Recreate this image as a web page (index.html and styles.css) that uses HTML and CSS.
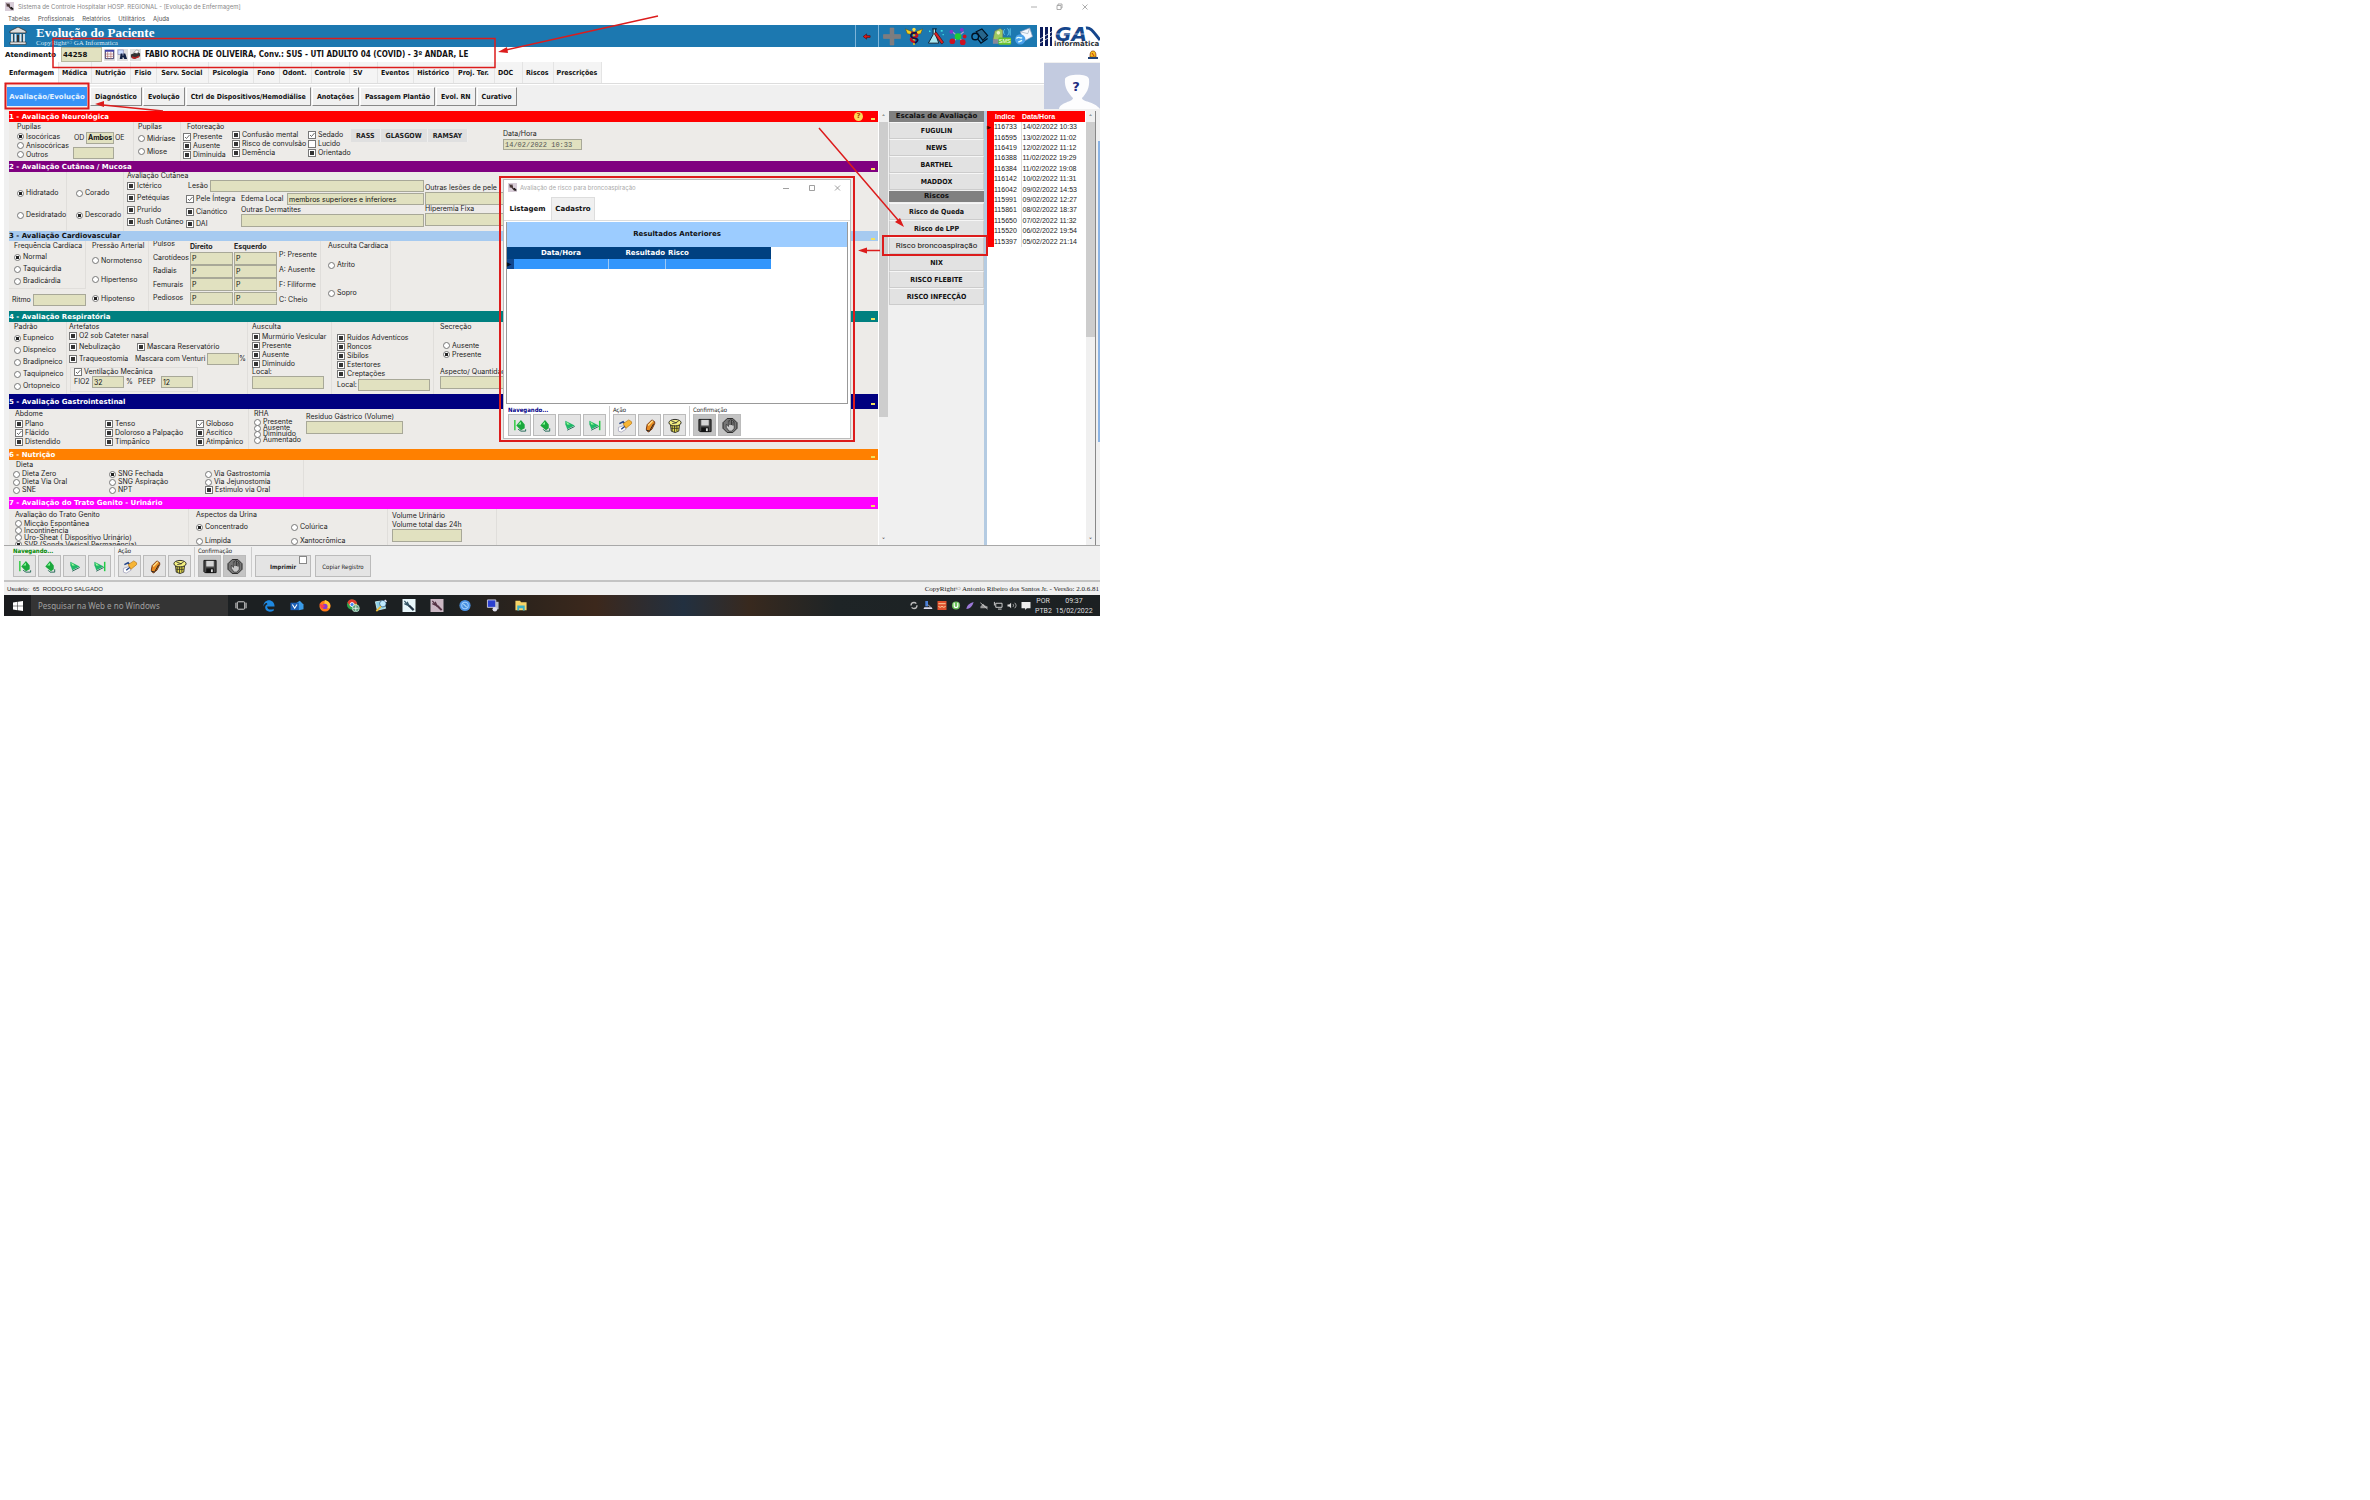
FILE: index.html
```html
<!DOCTYPE html>
<html lang="pt-BR">
<head>
<meta charset="utf-8">
<title>Sistema de Controle Hospitalar - Evolução de Enfermagem</title>
<link rel="stylesheet" href="styles.css">
</head>
<body>
<svg class="defs" aria-hidden="true">
  <symbol id="i-tool" viewBox="0 0 12 12"><path fill="#d8cdd8" d="M0 0h12v12H0z"/><path d="M2 2l7 8M5 2l1 4M2 5l4 1" stroke="#433" stroke-width="1.6"/><path d="M8 7l3 3" stroke="#111" stroke-width="2"/></symbol>
  <symbol id="i-first" viewBox="0 0 16 16"><path d="M2.500 2v11" stroke="#3c4" stroke-width="1.600"/><path d="M4 8l5-6 4 5v4l-4 2z" fill="#1aa83c"/><path d="M6 7l3-3v3z" fill="#8f9"/><path d="M6 12l3 2h5v-2" stroke="#265" fill="none"/></symbol>
  <symbol id="i-prev" viewBox="0 0 16 16"><path d="M3 8l5-6 4 5v4l-3 2z" fill="#1aa83c"/><path d="M5 7l3-3v3z" fill="#8f9"/><path d="M6 12l2 2h5v-3" stroke="#265" fill="none"/></symbol>
  <symbol id="i-next" viewBox="0 0 16 16"><path d="M3 3l10 5-8 4-1-3-1-2z" fill="#20b868"/><path d="M4 4l4 3H5z" fill="#af9"/><path d="M5 13l8-4" stroke="#265"/></symbol>
  <symbol id="i-last" viewBox="0 0 16 16"><path d="M2 3l10 5-8 4-1-3-1-2z" fill="#20b868"/><path d="M3 4l4 3H4z" fill="#af9"/><path d="M13 3v10" stroke="#2c4" stroke-width="1.600"/><path d="M4 13l8-4" stroke="#265"/></symbol>
  <symbol id="i-new" viewBox="0 0 16 16"><path d="M1 10l6-2 2 4-5 3-3-1z" fill="#fff" stroke="#88a" stroke-width=".6"/><path d="M2 6l4-2 3 4-5 4" fill="none" stroke="#248" stroke-width="1.500"/><path d="M6 6l6-4 3 2v2l-6 5z" fill="#f7b535" stroke="#a60" stroke-width=".6"/></symbol>
  <symbol id="i-edit" viewBox="0 0 16 16"><path d="M4 12l1-5 5-5 3 2v2l-3 6-4 3z" fill="#e88a20" stroke="#620" stroke-width=".9"/><path d="M6 8l5-5" stroke="#fd8" stroke-width="1.600"/><path d="M4 13l4 1M12 6l-4 7" stroke="#222"/></symbol>
  <symbol id="i-trash" viewBox="0 0 16 16"><path d="M3 6h10l-1 8-4 1.500L4 14z" fill="#e6dc50" stroke="#222" stroke-width=".9"/><ellipse cx="8" cy="5" rx="6.500" ry="3.500" fill="#f4f080" stroke="#222"/><path d="M5 8v6M7.500 8v7M10 8v6M4 11h8" stroke="#332" stroke-width=".9"/><path d="M4 3l5 2 3-2M5 6l5-1" stroke="#333" fill="none" stroke-width=".9"/></symbol>
  <symbol id="i-save" viewBox="0 0 16 16"><path d="M1.500 1.500h13v13h-12l-1-1z" fill="#4a4a4a" stroke="#111"/><path fill="#d4d4d4" d="M4 2h8v6H4z"/><path fill="#111" d="M4 10h8v5H4z"/><path fill="#ddd" d="M9 11h2v3H9z"/></symbol>
  <symbol id="i-stop" viewBox="0 0 16 16"><path d="M5 .5h6l4.500 4.500v6L11 15.500H5L.5 11V5z" fill="#777" stroke="#222"/><path d="M4 7v3l3 4h3l2.500-3V4h-1.300v4V2.500H9.700v5V2H8v5.500V3H6.300v6L5 7z" fill="#c9c9c9" stroke="#222" stroke-width=".7"/></symbol>
</svg>

<main class="app">
  <header>
    <div class="titlebar">
      <svg class="ico9"><use href="#i-tool"/></svg><span>Sistema de Controle Hospitalar HOSP. REGIONAL - [Evolução de Enfermagem]</span>
      <span class="winctl"><svg viewBox="0 0 60 8" width="60" height="8" fill="none" stroke="#999" stroke-width=".8"><path d="M1 4h6"/><path d="M27 2.500h4v4h-4zM28 2.500V1h4v4h-1M52.500 1.500l5 5M57.500 1.500l-5 5"/></svg></span>
    </div>
    <nav class="menu"><a href="#">Tabelas</a><a href="#">Profissionais</a><a href="#">Relatórios</a><a href="#">Utilitários</a><a href="#">Ajuda</a></nav>
    <div class="banner">
      <svg class="temple" viewBox="0 0 18 18"><path d="M9 0l8 4v2H1V4z" fill="#ddd" stroke="#333" stroke-width=".8"/><path d="M3 7v8M6.500 7v8M11.500 7v8M15 7v8" stroke="#e8e8e8" stroke-width="1.800"/><path d="M4.500 7v8M13.500 7v8" stroke="#333" stroke-width=".7"/><path d="M8 8h2v7H8z" fill="#333"/><path d="M1 15h16v2.500H1z" fill="#ddd" stroke="#333" stroke-width=".6"/></svg>
      <div class="brand"><h1>Evolução do Paciente</h1><p>CopyRight© GA Informatica</p></div>
      <div class="bannericons">
        <button class="back" aria-label="Voltar"><svg viewBox="0 0 10 8" width="9" height="7"><path d="M0 4l4-3v2h4v2H4v2z" fill="#e01818" stroke="#400" stroke-width=".6"/></svg></button>
        <svg viewBox="0 0 20 20"><path d="M8 1h4v7h7v4h-7v7H8v-7H1V8h7z" fill="#7d7d80" stroke="#a08070" stroke-width=".5"/></svg>
        <svg viewBox="0 0 20 20"><path d="M1 2l7 3v3L3 7zM19 2l-7 3v3l5-1z" fill="#f0d020" stroke="#640" stroke-width=".5"/><path d="M10 2v17" stroke="#fc0" stroke-width="1.500"/><path d="M7 6c8 0 8 5 3 5s-4 4 1 5" fill="none" stroke="#c01020" stroke-width="2.400"/><path d="M13 6c-8 0-8 5-2 6s1 4 0 5" fill="none" stroke="#114" stroke-width="1.800"/><circle cx="10" cy="2.500" r="1.800" fill="#fd4"/></svg>
        <svg viewBox="0 0 20 20"><path d="M6 2h5M7 2v6l-5 9h11L9.500 8V2" fill="#a8e6ee" stroke="#123" stroke-width="1"/><path d="M10 5l8 11-2 2L8 7z" fill="#d22" stroke="#300" stroke-width=".6"/><path d="M3 4l1 1M15 4h2M17 8h1" stroke="#4fe" stroke-width="1.300"/></svg>
        <svg viewBox="0 0 20 20"><path d="M10 10L4 5M10 10l6-5M10 10l-5 6M10 10l6 6" stroke="#a9c" stroke-width="1.200"/><circle cx="10" cy="10" r="3.500" fill="#2c3"/><g fill="#c12"><circle cx="4" cy="15" r="3"/><circle cx="15" cy="16" r="3"/><circle cx="17" cy="10" r="2"/></g><g fill="#83c"><circle cx="3" cy="5" r="2"/><circle cx="14" cy="3" r="2"/></g></svg>
        <svg viewBox="0 0 20 20"><path d="M6 5l6-3 6 7-5 5z" fill="#27668c" stroke="#012" stroke-width="1.200"/><circle cx="5" cy="10" r="3.500" fill="none" stroke="#012" stroke-width="1.500"/><path d="M8 13l3 4 7-5" fill="none" stroke="#012" stroke-width="1.300"/></svg>
        <svg viewBox="0 0 22 20"><path d="M3 4l6-3 3 2v9l-7 3-4-2z" fill="#9ec860" stroke="#567" stroke-width=".8"/><circle cx="7" cy="6" r="2" fill="#e8f4c0"/><path d="M1 13h6v5H1z" fill="#889"/><rect x="7" y="11" width="14" height="8" rx="1.500" fill="#6cc52c"/><path d="M14 8a4 4 0 010-6M17 9a6 6 0 000-8M20 9V1" fill="none" stroke="#6ce" stroke-width="1"/><text x="14" y="17" font-family="Liberation Sans" font-size="6" fill="#fff" text-anchor="middle">SMS</text></svg>
        <svg viewBox="0 0 20 20"><path d="M6 5l10-4 3 9-9 5z" fill="#f4f8ff" stroke="#89b" stroke-width=".7"/><path d="M6 5l8 2 2-6" fill="none" stroke="#9ab" stroke-width=".7"/><circle cx="6" cy="13" r="5.500" fill="#4aa0ea"/><path d="M2 12c3-3 4 1 6-1M4 16l4-2" stroke="#dff" fill="none" stroke-width="1.500"/></svg>
      </div>
      <svg class="galogo" viewBox="0 0 60 22"><g fill="#0c1c5c"><path d="M0 2h3v19H0zM5 2h3v19H5zM10 2h2v19h-2z"/></g><path d="M0 14l13-8M0 18l13-8" stroke="#fff" stroke-width=".8"/><text x="15" y="16" font-family="DejaVu Sans" font-weight="bold" font-style="italic" font-size="20" fill="#15468c">GA</text><path d="M16 9h44" stroke="#fff" stroke-width=".6"/><path d="M46 3c5-1 8 5 14 12" fill="none" stroke="#15468c" stroke-width="3"/><text x="14" y="21" font-family="DejaVu Sans" font-weight="bold" font-size="7" fill="#2a3038">informática</text></svg>
    </div>
    <div class="patient">
      <label for="atend">Atendimento</label><input id="atend" value="44258">
      <button aria-label="Agenda"><svg viewBox="0 0 12 12"><path fill="#fff" stroke="#336" d="M1.500 1.500h9v9h-9z"/><path fill="#44a" d="M1 1h10v2H1z"/><path d="M1 5.500h10M1 8h10M4 3v8M7.500 3v8" stroke="#a66" stroke-width=".7"/></svg></button>
      <button aria-label="Localizar"><svg viewBox="0 0 12 12"><path d="M1 1h6v5H1z" fill="#cdf" stroke="#77a" stroke-width=".6"/><path d="M3 11l1-6h2v2h1V5h2l2 6H8L7 9H6v2z" fill="#124"/></svg></button>
      <button aria-label="Imprimir ficha"><svg viewBox="0 0 12 12"><path d="M1 6l7-3 3 2v3l-6 3-4-2z" fill="#333"/><path d="M4 4l3-3 3 1-2 3z" fill="#fff" stroke="#555" stroke-width=".5"/><path d="M2 8l4 1 4-2v2l-5 2-3-1z" fill="#b22"/></svg></button>
      <strong>FABIO ROCHA DE OLIVEIRA, Conv.: SUS - UTI ADULTO 04 (COVID) - 3º ANDAR, LE</strong>
      <svg class="bell" viewBox="0 0 10 10"><path d="M2 7c0-5 1-6 3-6s3 1 3 6z" fill="#f7c020" stroke="#830" stroke-width=".7"/><path d="M0 7h10v2H0z" fill="#247"/><path d="M4 3l2 3" stroke="#c31"/></svg>
    </div>
    <div class="tabsarea">
      <div class="tabscol">
        <nav class="tabs"><a class="on" href="#">Enfermagem</a><a href="#">Médica</a><a href="#">Nutrição</a><a class="roomy" href="#">Fisio</a><a class="roomy" href="#">Serv. Social</a><a class="roomy" href="#">Psicologia</a><a href="#">Fono</a><a href="#">Odont.</a><a href="#">Controle</a><a class="w28" href="#">SV</a><a href="#">Eventos</a><a href="#">Histórico</a><a class="roomy" href="#">Proj. Ter.</a><a class="w28" href="#">DOC</a><a href="#">Riscos</a><a href="#">Prescrições</a></nav>
        <div class="subtabs"><button class="on">Avaliação/Evolução</button><button>Diagnóstico</button><button>Evolução</button><button>Ctrl de Dispositivos/Hemodiálise</button><button>Anotações</button><button>Passagem Plantão</button><button>Evol. RN</button><button>Curativo</button></div>
      </div>
      <svg class="photo" viewBox="0 0 56 46"><path fill="#c3cbe0" d="M0 0h56v46H0z"/><path d="M15 46c1-7 14-7 14-11-4-4-9-10-8-19 1-5 23-6 24 0 1 9-3 15-7 19 0 4 12 3 18 11z" fill="#fdfdfe"/><text x="32" y="28" font-family="DejaVu Sans" font-weight="bold" font-size="13" fill="#202a80" text-anchor="middle">?</text></svg>
    </div>
  </header>

  <div class="work">
    <form class="sections">
      <h2 class="c1">1 - Avaliação Neurológica<span class="help">?</span><i></i></h2>
      <div class="sec">
        <div class="grp s1a"><p class="lg">Pupilas</p>
          <div class="pair"><div class="p9"><label><input type="radio" name="pup" checked>Isocóricas</label><label><input type="radio" name="pup">Anisocóricas</label><label><input type="radio" name="pup">Outros</label></div>
          <div class="odoe"><span>OD</span><input class="bold" aria-label="Olho" value="Ambos"><span>OE</span><input class="wide" aria-label="Outros"></div></div></div>
        <div class="grp s1b"><p class="lg">Pupilas</p><div class="p13"><label><input type="radio" name="mi">Midríase</label><label><input type="radio" name="mi">Miose</label></div></div>
        <div class="grp s1c"><p class="lg ind">Fotoreação</p><div class="p9"><label><input type="checkbox" checked>Presente</label><label><input type="checkbox" class="mx">Ausente</label><label><input type="checkbox" class="mx">Diminuida</label></div></div>
        <div class="grp s1d"><div class="p9"><label><input type="checkbox" class="mx">Confusão mental</label><label><input type="checkbox" class="mx">Risco de convulsão</label><label><input type="checkbox" class="mx">Demência</label></div></div>
        <div class="grp s1e"><div class="p9"><label><input type="checkbox" checked>Sedado</label><label><input type="checkbox">Lucido</label><label><input type="checkbox" class="mx">Orientado</label></div></div>
        <div class="scales"><button type="button">RASS</button><button type="button">GLASGOW</button><button type="button">RAMSAY</button></div>
        <div class="date"><label for="dh">Data/Hora</label><input id="dh" value="14/02/2022 10:33"></div>
      </div>

      <h2 class="c2">2 - Avaliação Cutânea / Mucosa<i></i></h2>
      <div class="sec">
        <div class="grp s2a"><div class="p22"><label><input type="radio" name="hid" checked>Hidratado</label><label><input type="radio" name="hid">Desidratado</label></div></div>
        <div class="grp s2b"><div class="p22"><label><input type="radio" name="cor">Corado</label><label><input type="radio" name="cor" checked>Descorado</label></div></div>
        <div class="grp s2c"><p class="lg">Avaliação Cutânea</p><div class="p12"><label><input type="checkbox" class="mx">Ictérico</label><label><input type="checkbox" class="mx">Petéquias</label><label><input type="checkbox" class="mx">Prurido</label><label><input type="checkbox" class="mx">Rush Cutâneo</label></div></div>
        <div class="s2d">
          <div class="line"><label for="les">Lesão</label><input id="les"></div>
          <div class="line"><label class="pele"><input type="checkbox" checked>Pele Íntegra</label><label for="ede">Edema Local</label><input id="ede" value="membros superiores e inferiores"></div>
          <div class="pair"><div class="p12 pele"><label><input type="checkbox" class="mx">Cianótico</label><label><input type="checkbox" class="mx">DAI</label></div><div class="stack"><label for="der">Outras Dermatites</label><input id="der"></div></div>
        </div>
        <div class="s2e"><div class="stack"><label for="out">Outras lesões de pele</label><input id="out"></div><div class="stack"><label for="hip">Hiperemia Fixa</label><input id="hip"></div></div>
      </div>

      <h2 class="c3">3 - Avaliação Cardiovascular<i></i></h2>
      <div class="sec">
        <div class="s3a"><div class="grp"><p class="lg">Frequência Cardíaca</p><div class="p12"><label><input type="radio" name="fc" checked>Normal</label><label><input type="radio" name="fc">Taquicárdia</label><label><input type="radio" name="fc">Bradicárdia</label></div></div><div class="line"><label for="rit">Ritmo</label><input id="rit"></div></div>
        <div class="grp s3b"><p class="lg">Pressão Arterial</p><div class="p19"><label><input type="radio" name="pa">Normotenso</label><label><input type="radio" name="pa">Hipertenso</label><label><input type="radio" name="pa" checked>Hipotenso</label></div></div>
        <div class="grp s3c">
          <table class="pulse">
            <tr><td class="top">Pulsos</td><th scope="col">Direito</th><th scope="col">Esquerdo</th></tr>
            <tr><td>Carotídeos</td><td><input aria-label="Carotídeo direito" value="P"></td><td><input aria-label="Carotídeo esquerdo" value="P"></td></tr>
            <tr><td>Radiais</td><td><input aria-label="Radial direito" value="P"></td><td><input aria-label="Radial esquerdo" value="P"></td></tr>
            <tr><td>Femurais</td><td><input aria-label="Femural direito" value="P"></td><td><input aria-label="Femural esquerdo" value="P"></td></tr>
            <tr><td>Pediosos</td><td><input aria-label="Pedioso direito" value="P"></td><td><input aria-label="Pedioso esquerdo" value="P"></td></tr>
          </table>
          <div class="key"><span>P: Presente</span><span>A: Ausente</span><span>F: Filiforme</span><span>C: Cheio</span></div>
        </div>
        <div class="grp s3d"><p class="lg">Ausculta Cardíaca</p><div class="p28"><label><input type="radio" name="ac">Atrito</label><label><input type="radio" name="ac">Sopro</label></div></div>
      </div>

      <h2 class="c4">4 - Avaliação Respiratória<i></i></h2>
      <div class="sec">
        <div class="grp s4a"><p class="lg">Padrão</p><div class="p12"><label><input type="radio" name="pd" checked>Eupneico</label><label><input type="radio" name="pd">Dispneico</label><label><input type="radio" name="pd">Bradipneico</label><label><input type="radio" name="pd">Taquipneico</label><label><input type="radio" name="pd">Ortopneico</label></div></div>
        <div class="grp s4b"><p class="lg">Artefatos</p>
          <div class="p8"><label><input type="checkbox" class="mx">O2 sob Cateter nasal</label></div>
          <div class="line"><label class="c68"><input type="checkbox" class="mx">Nebulização</label><label><input type="checkbox" class="mx">Mascara Reservatório</label></div>
          <div class="line"><label class="c66"><input type="checkbox" class="mx">Traqueostomia</label><label class="c68" for="ven">Mascara com Venturi</label><input id="ven"><span>%</span></div>
          <div class="grp vent"><label><input type="checkbox" checked>Ventilação Mecânica</label><div class="line"><label for="fio">FIO2</label><input id="fio" value="32"><span class="pct">%</span><label for="peep">PEEP</label><input id="peep" value="12"></div></div>
        </div>
        <div class="grp s4c"><p class="lg">Ausculta</p><div class="p9"><label><input type="checkbox" class="mx">Murmúrio Vesicular</label><label><input type="checkbox" class="mx">Presente</label><label><input type="checkbox" class="mx">Ausente</label><label><input type="checkbox" class="mx">Diminuído</label></div><div class="stack"><label for="lo1">Local:</label><input id="lo1"></div></div>
        <div class="grp s4d"><div class="p9"><label><input type="checkbox" class="mx">Ruídos Adventícos</label><label><input type="checkbox" class="mx">Roncos</label><label><input type="checkbox" class="mx">Sibilos</label><label><input type="checkbox" class="mx">Estertores</label><label><input type="checkbox" class="mx">Creptações</label></div><div class="line"><label for="lo2">Local:</label><input id="lo2"></div></div>
        <div class="grp s4e"><p class="lg">Secreção</p><div class="p9"><label><input type="radio" name="se">Ausente</label><label><input type="radio" name="se" checked>Presente</label></div><div class="stack"><label for="asp">Aspecto/ Quantidade</label><input id="asp"></div></div>
      </div>

      <h2 class="c5">5 - Avaliação Gastrointestinal<i></i></h2>
      <div class="sec">
        <div class="grp s5a"><p class="lg">Abdome</p><div class="p9 c3x"><label><input type="checkbox" class="mx">Plano</label><label><input type="checkbox" class="mx">Tenso</label><label><input type="checkbox" checked>Globoso</label><label><input type="checkbox" checked>Flácido</label><label><input type="checkbox" class="mx">Doloroso a Palpação</label><label><input type="checkbox" class="mx">Ascítico</label><label><input type="checkbox" class="mx">Distendido</label><label><input type="checkbox" class="mx">Timpânico</label><label><input type="checkbox" class="mx">Atimpânico</label></div></div>
        <div class="grp s5b"><p class="lg">RHA</p><div class="p6"><label><input type="radio" name="rha">Presente</label><label><input type="radio" name="rha">Ausente</label><label><input type="radio" name="rha">Diminuido</label><label><input type="radio" name="rha">Aumentado</label></div></div>
        <div class="stack s5c"><label for="res">Residuo Gástrico (Volume)</label><input id="res"></div>
      </div>

      <h2 class="c6">6 - Nutrição<i></i></h2>
      <div class="sec">
        <div class="grp s6a"><p class="lg ind2">Dieta</p><div class="p8 c3x"><label><input type="radio" name="di">Dieta Zero</label><label><input type="radio" name="di" checked>SNG Fechada</label><label><input type="radio" name="di">Via Gastrostomia</label><label><input type="radio" name="di">Dieta Via Oral</label><label><input type="radio" name="di">SNG Aspiração</label><label><input type="radio" name="di">Via Jejunostomia</label><label><input type="radio" name="di">SNE</label><label><input type="radio" name="di">NPT</label><label><input type="checkbox" class="mx">Estimulo via Oral</label></div></div>
      </div>

      <h2 class="c7">7 - Avaliação do Trato Genito - Urinário<i></i></h2>
      <div class="sec">
        <div class="grp s7a"><p class="lg">Avaliação do Trato Genito</p><div class="p7"><label><input type="radio" name="tg">Micção Espontânea</label><label><input type="radio" name="tg">Incontinência</label><label><input type="radio" name="tg">Uro-Sheat ( Dispositivo Urinário)</label><label><input type="radio" name="tg" checked>SVP (Sonda Vesical Permanência)</label></div></div>
        <div class="grp s7b"><p class="lg">Aspectos da Urina</p><div class="p14 c2x"><label><input type="radio" name="ur" checked>Concentrado</label><label><input type="radio" name="ur">Colúrica</label><label><input type="radio" name="ur">Límpida</label><label><input type="radio" name="ur">Xantocrômica</label></div></div>
        <div class="grp s7c"><p class="lg">Volume Urinário</p><div class="stack"><label for="vol">Volume total das 24h</label><input id="vol"></div></div>
      </div>
    </form>
    <div class="scroll"><b>˄</b><span class="thumb long"></span><b>˅</b></div>
    <aside class="risks">
      <h3>Escalas de Avaliação</h3>
      <button>FUGULIN</button><button>NEWS</button><button>BARTHEL</button><button>MADDOX</button>
      <h3 class="second">Riscos</h3>
      <button>Risco de Queda</button><button>Risco de LPP</button><button class="pick">Risco broncoaspiração</button><button>NIX</button><button>RISCO FLEBITE</button><button>RISCO INFECÇÃO</button>
    </aside>
    <div class="history">
      <table>
        <thead><tr><th></th><th>Indice</th><th>Data/Hora</th></tr></thead>
        <tbody>
        <tr><td>▶</td><td>116733</td><td>14/02/2022 10:33</td></tr>
        <tr><td></td><td>116595</td><td>13/02/2022 11:02</td></tr>
        <tr><td></td><td>116419</td><td>12/02/2022 11:12</td></tr>
        <tr><td></td><td>116388</td><td>11/02/2022 19:29</td></tr>
        <tr><td></td><td>116384</td><td>11/02/2022 19:08</td></tr>
        <tr><td></td><td>116142</td><td>10/02/2022 11:31</td></tr>
        <tr><td></td><td>116042</td><td>09/02/2022 14:53</td></tr>
        <tr><td></td><td>115991</td><td>09/02/2022 12:27</td></tr>
        <tr><td></td><td>115861</td><td>08/02/2022 18:37</td></tr>
        <tr><td></td><td>115650</td><td>07/02/2022 11:32</td></tr>
        <tr><td></td><td>115520</td><td>06/02/2022 19:54</td></tr>
        <tr><td></td><td>115397</td><td>05/02/2022 21:14</td></tr>
        </tbody>
      </table>
    </div>
    <div class="scroll"><b>˄</b><span class="thumb"></span><b>˅</b></div>
    <div class="edge"></div>
  </div>

  <div class="actions main">
    <div class="set"><p class="green">Navegando...</p><button aria-label="Primeiro"><svg><use href="#i-first"/></svg></button><button aria-label="Anterior"><svg><use href="#i-prev"/></svg></button><button aria-label="Próximo"><svg><use href="#i-next"/></svg></button><button aria-label="Último"><svg><use href="#i-last"/></svg></button></div>
    <div class="set"><p>Ação</p><button aria-label="Novo"><svg><use href="#i-new"/></svg></button><button aria-label="Editar"><svg><use href="#i-edit"/></svg></button><button aria-label="Excluir"><svg><use href="#i-trash"/></svg></button></div>
    <div class="set"><p>Confirmação</p><button class="dk" aria-label="Salvar"><svg><use href="#i-save"/></svg></button><button class="dk" aria-label="Cancelar"><svg><use href="#i-stop"/></svg></button></div>
    <div class="set last"><button class="txt print"><strong>Imprimir</strong></button><input type="checkbox" class="prev" aria-label="Visualizar impressão"><button class="txt">Copiar Registro</button></div>
  </div>
  <footer class="status"><span>Usuário:&nbsp; 65 &nbsp;RODOLFO SALGADO</span><span class="serif">CopyRight© Antonio Ribeiro dos Santos Jr. - Versão: 2.0.6.81</span></footer>

  <div class="taskbar">
    <button class="start" aria-label="Iniciar"><svg viewBox="0 0 10 10" width="10" height="10"><path fill="#fff" d="M0 1.500l4.500-.7v4H0zM5 .7L10 0v4.800H5zM0 5.300h4.500v4L0 8.600zM5 5.300h5V10l-5-.7z"/></svg></button>
    <input class="search" placeholder="Pesquisar na Web e no Windows" aria-label="Pesquisar">
    <div class="apps">
      <svg viewBox="0 0 14 14"><rect x="3" y="3" width="8" height="8" rx="1" fill="none" stroke="#ddd"/><path d="M1.500 4v6M12.500 4v6" stroke="#ddd"/></svg>
      <svg viewBox="0 0 14 14"><path d="M1 8c0-9 12-9 12 0H5c0 4 5 4 7 2.500v2.200C7 15 2 13 3 8c1-3 6-3 6-1.500H5C6 3 2 4 1 8z" fill="#1e88e0"/></svg>
      <svg viewBox="0 0 14 14"><path d="M5 5l5-3 4 4v5l-5 1z" fill="#3a9be8"/><path d="M0 4h9v8H0z" fill="#1c5fb5"/><path d="M2 6l2.500 4L7 6" stroke="#fff" fill="none" stroke-width="1.200"/></svg>
      <svg viewBox="0 0 14 14"><circle cx="7" cy="7.500" r="6" fill="#ff7a1a"/><path d="M7 1c4 1 7 5 5 9-4 0-7-2-5-9z" fill="#ffc832"/><circle cx="7" cy="8" r="2.800" fill="#8a3ad0"/><path d="M1 5c2 0 3 2 6 2-1 3-4 3-4 3z" fill="#ff3e4e"/></svg>
      <svg viewBox="0 0 14 14"><circle cx="6" cy="6" r="5.500" fill="#2da44e"/><path d="M1 3.500A5.500 5.500 0 0111.400 5H6L4 8z" fill="#e33b2e"/><path d="M11.500 5c0 4-2 6-5 6.500L8 6z" fill="#fbc116"/><circle cx="6" cy="6" r="2.200" fill="#4285f4" stroke="#fff"/><circle cx="10" cy="10" r="3.800" fill="#5a9a78" stroke="#dfe" stroke-width=".7"/><path d="M10 7v6M7 10h6" stroke="#fff" stroke-width=".8"/></svg>
      <svg viewBox="0 0 14 14"><path d="M1 3l8-1 3 8-9 2z" fill="#8ed0e8" stroke="#dff" stroke-width=".8"/><circle cx="9" cy="5" r="3.500" fill="#bfeaff" stroke="#246" stroke-width=".7"/><path d="M7 8l-5 5" stroke="#eb3" stroke-width="1.800"/><path d="M11 1l2 2" stroke="#eef" stroke-width="1.500"/></svg>
      <svg viewBox="0 0 14 14"><path fill="#e8f6fa" d="M0 0h14v14H0z"/><path d="M2 2l5 6M5 3l2 4M2 5l4 2" stroke="#356" stroke-width="1.300"/><path d="M7 7l5 5" stroke="#234" stroke-width="2.400"/></svg>
      <svg viewBox="0 0 14 14"><path fill="#cbb8c4" d="M0 0h14v14H0z"/><path d="M2 2l5 6M5 3l2 4M2 5l4 2" stroke="#534" stroke-width="1.300"/><path d="M7 7l5 5" stroke="#534" stroke-width="2.200"/></svg>
      <svg viewBox="0 0 14 14"><circle cx="7" cy="7" r="6" fill="#4a90e0"/><circle cx="7" cy="7" r="3.500" fill="none" stroke="#9cf" stroke-width="1.200"/><path d="M5 5l4 4" stroke="#dff"/></svg>
      <svg viewBox="0 0 14 14"><path d="M1 1h9v8H1z" fill="#2a3fd0" stroke="#ccd"/><path d="M10 3h3v8h-3z" fill="#b8bccc"/><circle cx="9" cy="11" r="2.500" fill="#dde"/></svg>
      <svg viewBox="0 0 14 14"><path d="M1 2h5l1 1.500h6V12H1z" fill="#f8d568"/><path d="M3 7h8v5.500H9V10H5v2.500H3z" fill="#3cb0c8"/></svg>
    </div>
    <div class="tray">
      <svg viewBox="0 0 10 10"><circle cx="5" cy="5" r="3.300" fill="none" stroke="#bbb" stroke-width="1.500" stroke-dasharray="8 2"/></svg>
      <svg viewBox="0 0 10 10"><path d="M2 0h3v6H2z" fill="#4a80d8"/><path d="M1 7h8l1 2H0z" fill="#dde"/><path d="M5 4l3 3" stroke="#ccd"/></svg>
      <svg viewBox="0 0 10 10"><path fill="#e0502c" d="M0 0h10v10H0z"/><path d="M1 3h8M1 6l2 1 2-1 2 1 2-1" stroke="#fda" fill="none"/></svg>
      <svg viewBox="0 0 10 10"><circle cx="5" cy="5" r="4.500" fill="#6cc05c"/><path d="M3 2v3c0 3 4 3 4 0V2" fill="none" stroke="#fff" stroke-width="1.300"/></svg>
      <svg viewBox="0 0 10 10"><path d="M1 9c0-4 4-7 8-8-1 4-3 7-8 8z" fill="#9c78d8"/></svg>
      <svg viewBox="0 0 10 10"><path d="M1 8V6l3-3 2 2 3 1v2z" fill="#999"/><path d="M1 2l8 7" stroke="#ccc"/></svg>
      <svg viewBox="0 0 10 10"><path d="M2.500 2.500h7v4.500h-7zM5 9h4M1 1v4" fill="none" stroke="#ddd"/></svg>
      <svg viewBox="0 0 10 10"><path d="M0 4h2l2-2v6L2 6H0z" fill="#ddd"/><path d="M6 3.500c1 1 1 2 0 3M8 2c2 2 2 4 0 6" fill="none" stroke="#ddd" stroke-width=".8"/></svg>
      <svg viewBox="0 0 10 10"><path d="M0 1h10v7H6L4 10V8H0z" fill="#eee"/></svg>
      <p>POR<br>PTB2</p><p class="clock">09:37<br>15/02/2022</p>
    </div>
  </div>

  <section class="dialog" aria-label="Avaliação de risco para broncoaspiração">
    <div class="dtitle"><svg class="ico9"><use href="#i-tool"/></svg><span>Avaliação de risco para broncoaspiração</span><svg class="dctl" viewBox="0 0 60 8" fill="none" stroke="#888" stroke-width=".8"><path d="M1 4.500h6M27.500 1.500h5v5h-5zM53 1.500l5 5M58 1.500l-5 5"/></svg></div>
    <nav class="dtabs"><a class="on" href="#">Listagem</a><a href="#">Cadastro</a></nav>
    <div class="dbody">
      <h4>Resultados Anteriores</h4>
      <table><thead><tr><th class="sel"></th><th class="a">Data/Hora</th><th class="b">Resultado</th><th class="c">Risco</th></tr></thead><tbody><tr><td class="sel">▶</td><td></td><td></td><td></td></tr></tbody></table>
    </div>
    <div class="actions">
      <div class="set"><p class="navy">Navegando...</p><button aria-label="Primeiro"><svg><use href="#i-first"/></svg></button><button aria-label="Anterior"><svg><use href="#i-prev"/></svg></button><button aria-label="Próximo"><svg><use href="#i-next"/></svg></button><button aria-label="Último"><svg><use href="#i-last"/></svg></button></div>
      <div class="set"><p>Ação</p><button aria-label="Novo"><svg><use href="#i-new"/></svg></button><button aria-label="Editar"><svg><use href="#i-edit"/></svg></button><button aria-label="Excluir"><svg><use href="#i-trash"/></svg></button></div>
      <div class="set last"><p>Confirmação</p><button class="dk" aria-label="Salvar"><svg><use href="#i-save"/></svg></button><button class="dk" aria-label="Cancelar"><svg><use href="#i-stop"/></svg></button></div>
    </div>
  </section>

  <svg class="marks" viewBox="4 0 1096 617" fill="none" stroke="#dc1c1c" stroke-width="1.500" aria-hidden="true">
    <path d="M53 38.500h442v29H53z"/>
    <path d="M5.500 83.500h83v25h-83z" stroke-width="2"/>
    <path d="M500 177h354v264H500z" stroke-width="2"/>
    <path d="M883 236h104v19H883z" stroke-width="2"/>
    <path d="M658 16L506 50M819 128l79 92M880 250.500h-14M163 111l-60-6"/>
    <g fill="#dc1c1c" stroke="none"><path d="M498 52l9-5 1 6zM904 227l-9-5 5-4zM858 250.500l9-3v6zM95 104l9-3v6z"/></g>
  </svg>
</main>
</body>
</html>
```
FILE: styles.css
```css
* { box-sizing: border-box; }
body { margin: 0; background: #fff; color: #222; font: 7px/8px Inter, "Liberation Sans", sans-serif; }
h1, h2, h3, h4, p { margin: 0; }
a { color: inherit; text-decoration: none; }
button, input { font: inherit; color: inherit; margin: 0; padding: 0; border-radius: 0; }
table { border-collapse: collapse; }
.defs { position: absolute; width: 0; height: 0; }
.app { position: relative; max-width: 1096px; margin-left: 4px; background: #f0f0f0; overflow: hidden; }
.ico9 { width: 9px; height: 9px; }

/* window chrome */
header { background: #fff; }
.titlebar { display: flex; align-items: center; gap: 4px; height: 13px; padding: 0 10px 0 1px; font: 6px/8px Inter, sans-serif; color: #888; }
.winctl { margin-left: auto; display: flex; }
.menu { display: flex; gap: 8px; height: 12px; padding: 2px 4px; font: 6px/8px Inter, sans-serif; color: #555; }
.banner { display: flex; align-items: center; height: 22px; background: #1c78b0; }
.temple { width: 18px; height: 18px; margin: 0 9px 0 5px; }
.brand { color: #fff; font-family: "Liberation Serif", serif; }
h1 { font-size: 13px; line-height: 13px; font-weight: bold; }
.brand p { font-size: 7px; line-height: 8px; color: #d8e8f4; }
.bannericons { display: flex; align-items: center; gap: 2px; margin-left: auto; height: 22px; padding-right: 3px; }
.bannericons > svg { width: 20px; height: 19px; }
.back { width: 24px; height: 22px; background: #1c78b0; border: 1px solid #7db4d8; border-width: 0 1px; display: grid; place-items: center; margin-right: 1px; }
.galogo { width: 63px; height: 22px; padding-left: 3px; background: #fff; }
.patient { display: flex; align-items: center; height: 15px; gap: 2px; font: bold 7px/8px "DejaVu Sans", sans-serif; color: #111; }
.patient label { width: 55px; padding-left: 1px; }
.patient input { width: 41px; height: 15px; background: #e1e1c0; border: 1px solid #b8b8a0; padding-left: 1px; }
.patient button { width: 11px; height: 12px; border: 0; background: #e0e0e0; display: grid; }
.patient strong { margin-left: 2px; font: bold 8px/8px "DejaVu Sans Condensed", "Noto Sans", sans-serif; }
.bell { width: 10px; height: 10px; margin: 0 2px 0 auto; }
.tabsarea { display: flex; height: 49px; background: #f0f0f0; }
.tabscol { flex: 1; }
.photo { width: 56px; height: 46px; margin-top: 1px; }
.tabs { display: flex; height: 22px; background: #fff; border-bottom: 1px solid #ddd; font: bold 7px/22px "DejaVu Sans Condensed", "Noto Sans", sans-serif; color: #111; }
.tabs a { padding: 0 4px 0 3px; background: #f4f4f4; border-right: 1px solid #e4e4e4; }
.tabs .roomy { padding: 0 5px 0 4px; }
.tabs .on { background: #fff; padding-left: 5px; }
.tabs .w28 { min-width: 28px; }
.subtabs { display: flex; height: 27px; padding: 2px 0 5px 3px; gap: 1px; border-top: 1px solid #fff; background: #f0f0f0; }
.subtabs button { padding: 0 4px; border: 1px solid #fff; border-right-color: #888; border-bottom-color: #888; background: #f0f0f0; font: bold 7px/8px "DejaVu Sans Condensed", "Noto Sans", sans-serif; color: #111; white-space: nowrap; }
.subtabs .on { width: 80px; padding: 0; margin-right: 2px; background: #3894f8; color: #e4f2ff; border-color: #3894f8; font-family: "DejaVu Sans", sans-serif; }

/* work area */
.work { display: flex; height: 435px; padding-left: 5px; border-bottom: 1px solid #a8a8a8; }
.sections { flex: 1; min-width: 0; height: 434px; overflow: hidden; background: #edebe8; display: grid; grid-template-rows: 11px 39px 11px 59px 10px 70px 11px 72px 15px 40px 11px 37px 12px 36px; }
h2 { display: flex; align-items: center; font: bold 7px/10px "DejaVu Sans", sans-serif; color: #fff; padding-right: 3px; }
h2 i { width: 4px; height: 2px; background: #f0e060; margin: 5px 0 0 auto; }
.help { margin-left: auto; width: 9px; height: 9px; border-radius: 50%; background: #fbd95a; color: #a40; line-height: 9px; text-align: center; }
.help + i { margin-left: 8px; }
.c1 { background: #f00; } .c2 { background: #800080; } .c3 { background: #a6caf0; color: #111; }
.c4 { background: #008080; } .c5 { background: #000080; } .c6 { background: #ff8000; } .c7 { background: #f0f; }
.sec { display: flex; min-width: 0; overflow: hidden; white-space: nowrap; }
.sec label { display: flex; align-items: center; gap: 2px; }
.grp { border-right: 1px solid #e0dedb; flex: none; }
.lg { height: 10px; padding-top: 1px; }
input[type=radio], input[type=checkbox] { appearance: none; flex: none; width: 7px; height: 7px; background: #fff; border: 1px solid #777; }
input[type=radio] { border-radius: 50%; }
input[type=radio]:checked { background: radial-gradient(#222 0 40%, #fff 50%); }
input[type=checkbox] { width: 8px; height: 8px; }
input[type=checkbox].mx { background: #333; box-shadow: inset 0 0 0 1px #fff; }
input[type=checkbox]:checked { background: #fff url("data:image/svg+xml,%3Csvg xmlns='http://www.w3.org/2000/svg' viewBox='0 0 6 6'%3E%3Cpath d='M1 3l1.500 1.500L5.500 1' fill='none' stroke='%23444' stroke-width='.8'/%3E%3C/svg%3E"); }
.sec input:not([type]) { height: 12px; min-width: 0; background: #e1e1c0; border: 1px solid #a8a898; padding-left: 1px; color: #111; }
.sec input.bold { font-weight: bold; }
.p6, .p7, .p8, .p9, .p12, .p13, .p14, .p19, .p22, .p28 { display: grid; align-items: center; justify-items: start; align-content: start; }
.p6 { grid-auto-rows: 6px; } .p7 { grid-auto-rows: 7px; } .p8 { grid-auto-rows: 8px; } .p9 { grid-auto-rows: 9px; }
.p12 { grid-auto-rows: 12px; } .p13 { grid-auto-rows: 13px; } .p14 { grid-auto-rows: 14px; } .p19 { grid-auto-rows: 19px; }
.p22 { grid-auto-rows: 22px; } .p28 { grid-auto-rows: 28px; }
.pair, .line { display: flex; }
.line { align-items: center; height: 12px; }
.line input:not([type]) { flex: 1; }
.stack { display: grid; grid-template-rows: 8px 13px; }
.stack input:not([type]) { height: 13px; }

.s1a { width: 125px; padding-left: 8px; }
.s1a .p9 { width: 56px; }
.odoe { display: grid; grid-template-columns: 13px 28px 13px; grid-template-rows: 11px 11px; row-gap: 4px; align-items: center; }
.odoe .wide { grid-column: 1 / 3; }
.odoe span { padding-left: 1px; }
.s1b { width: 47px; padding-left: 4px; }
.s1c { width: 49px; padding-left: 2px; border: 0; }
.ind { padding-left: 4px; }
.ind2 { padding-left: 3px; }
.s1d { width: 76px; padding: 8px 0 0 2px; border: 0; }
.s1e { width: 39px; padding: 8px 0 0 2px; border: 0; }
.scales { display: flex; width: 117px; height: 13px; margin: 7px 0 0 6px; }
.scales button { flex: 1 0 auto; border: 0; border-right: 1px solid #eee; background: #e0e0e0; font: bold 7px/8px "DejaVu Sans Condensed", "Noto Sans", sans-serif; }
.date { width: 79px; margin: 7px 0 0 35px; }
.date label { height: 10px; }
.date input:not([type]) { width: 100%; height: 11px; font-family: "Liberation Mono", monospace; color: #555; }

.s2a { width: 58px; padding: 10px 0 0 8px; }
.s2b { width: 57px; padding: 10px 0 0 9px; }
.s2c { width: 62px; padding-left: 3px; border: 0; }
.s2c .lg { padding-top: 0; height: 8px; }
.s2d { flex: none; width: 238px; padding-top: 8px; display: grid; grid-template-rows: 12px 12px 22px; row-gap: 1px; }
.s2d > .line:first-child label { width: 24px; padding-left: 2px; }
.pele { width: 55px; flex: none; }
.s2d .line label:nth-child(2) { width: 46px; }
.s2d .stack { flex: 1; }
.s2e { flex: none; width: 120px; padding: 12px 0 0 1px; }

.s3a { width: 77px; }
.s3a .grp { height: 48px; padding-left: 5px; border-bottom: 1px solid #e0dedb; }
.s3a .line { margin: 5px 0 0; padding-left: 3px; }
.s3a .line label { width: 21px; }
.s3b { width: 63px; padding-left: 6px; }
.s3c { width: 172px; display: flex; padding-left: 4px; }
.pulse { height: 64px; }
.pulse td, .pulse th { padding: 0 1px 0 0; text-align: left; line-height: 8px; height: 13px; }
.pulse tr:first-child > * { height: 10px; padding-top: 2px; }
.pulse tr:first-child > .top { padding: 0; vertical-align: top; line-height: 6px; }
.pulse td:first-child { width: 36px; }
.pulse input:not([type]) { display: block; width: 43px; height: 13px; }
.key { display: grid; grid-auto-rows: 15px; align-items: center; padding: 6px 0 0 1px; align-content: start; }
.s3d { width: 70px; padding-left: 7px; }

.s4a { width: 58px; padding-left: 5px; }
.s4b { width: 181px; padding-left: 2px; }
.s4b .c68 { width: 68px; flex: none; }
.s4b .c66 { width: 66px; flex: none; }
.s4b > .line input:not([type]) { flex: none; width: 32px; margin-left: 4px; }
.s4b .p8 { margin-bottom: 1px; }
.vent { width: 128px; height: 25px; margin: 2px 0 0 1px; padding: 0 0 0 3px; border: 1px solid #e0dedb; }
.vent .line label { width: 18px; flex: none; }
.vent .line input:not([type]) { flex: none; width: 32px; }
.vent .pct { width: 14px; padding-left: 2px; }
.vent .line label:nth-of-type(2) { width: 23px; }
.s4c { width: 84px; padding-left: 4px; }
.s4c .stack { width: 72px; }
.s4d { width: 102px; padding: 11px 0 0 5px; }
.s4d .line { width: 93px; height: 13px; }
.s4d .line label { width: 21px; }
.s4e { width: 110px; padding-left: 6px; }
.s4e .p9 { padding: 9px 0 9px 3px; }

.s5a { width: 240px; padding-left: 6px; }
.c3x { grid-template-columns: 90px 91px auto; }
.s5b { width: 52px; padding-left: 5px; border: 0; }
.s5c { width: 97px; margin: 4px 0 0 5px; align-content: start; }
.s6a { width: 295px; padding-left: 4px; }
.s6a .c3x { grid-template-columns: 96px 96px auto; }
.s7a { width: 180px; padding: 1px 0 0 6px; }
.s7b { width: 199px; padding: 1px 0 0 7px; }
.c2x { grid-template-columns: 95px auto; }
.s7c { width: 109px; padding: 2px 0 0 4px; }
.s7c .stack { width: 70px; }

.scroll { flex: none; width: 10px; display: flex; flex-direction: column; background: #f0f0f0; border-left: 1px solid #fff; }
.scroll b { height: 11px; line-height: 14px; text-align: center; color: #555; font-family: "DejaVu Sans", sans-serif; }
.scroll b:last-child { margin-top: auto; }
.thumb { height: 215px; background: #cdcdcd; }
.thumb.long { height: 295px; }
.risks { flex: none; width: 99px; padding-left: 1px; border-right: 3px solid #b4cbe2; }
.risks h3 { background: #808080; height: 11px; text-align: center; font: bold 7px/11px "DejaVu Sans", sans-serif; color: #111; }
.risks .second { margin: 1px 0; }
.risks button { display: block; width: 100%; height: 17px; border: 1px solid #ccc; border-top-color: #f6f6f6; background: #e2e2e2; font: bold 7px/8px "DejaVu Sans Condensed", "Noto Sans", sans-serif; color: #111; }
.risks .pick { font: 8px/9px Roboto, "Liberation Sans", sans-serif; }
.history { flex: none; width: 98px; background: #fff; font: 7px/8px "Liberation Sans", sans-serif; color: #222; }
.history table { width: 100%; height: 136px; }
.history th { background: #f00; color: #fff; height: 11px; padding: 0 0 0 1px; text-align: left; font-weight: bold; }
.history td { height: 10px; padding: 0; }
.history td:first-child { width: 7px; background: #f00; color: #400; font-size: 5px; }
.history td:nth-child(2) { width: 27px; border-right: 1px solid #ddd; }
.history td:nth-child(3) { padding-left: 1px; }
.edge { flex: none; width: 5px; background: #f0f0f0; border-left: 1px solid #888; }
.edge::after { content: ""; display: block; width: 2px; height: 301px; margin: 30px 0 0 2px; background: #8cb4e4; }

/* record toolbars */
.actions { display: flex; height: 34px; padding: 2px 0 2px 1px; font: 6px/7px "DejaVu Sans Condensed", "Noto Sans", sans-serif; }
.set { display: grid; grid-auto-flow: column; grid-template-rows: 8px 22px; column-gap: 2px; padding: 0 3px; border-right: 1px solid #ccc; }
.set p { grid-column: 1 / 4; grid-row: 1; width: 0; white-space: nowrap; }
.set button { grid-row: 2; width: 23px; height: 22px; background: #e4e4e4; border: 1px solid #bbb; display: grid; place-items: center; }
.set button svg { width: 16px; height: 15px; }
.set .dk { background: #c4c4c4; }
.set.last { border: 0; }
.green { color: #080; font-weight: bold; }
.navy { color: #008; font-weight: bold; }
.actions.main { padding: 1px 0 3px 6px; }
.set .txt { width: 56px; white-space: nowrap; }
.set .prev { grid-row: 2; margin: 1px 0 0 -14px; border-color: #888; }
.status { display: flex; justify-content: space-between; align-items: center; height: 15px; padding: 0 1px 0 3px; border-top: 2px solid #c4c4c4; font: 6px/8px "Liberation Sans", sans-serif; }
.serif { font-family: "Liberation Serif", serif; font-size: 7px; }

/* taskbar */
.taskbar { display: flex; align-items: center; height: 21px; background: linear-gradient(90deg, #1c2022 40%, #2e241c 48%, #3c281c 54%, #223040 62%, #38291e 68%, #1e2426 76%, #1c2022); color: #ddd; font: 7px/10px Roboto, sans-serif; }
.start { width: 27px; height: 21px; border: 0; background: #1a1c1e; display: grid; place-items: center; }
.search { width: 197px; height: 21px; border: 0; background: #343434; padding-left: 7px; font: 8px/10px "Noto Sans", sans-serif; }
.search::placeholder { color: #a0a0a0; opacity: 1; }
.apps { display: flex; gap: 14px; padding-left: 6px; }
.apps svg { width: 14px; height: 13px; }
.tray { display: flex; align-items: center; gap: 4px; margin-left: auto; padding-right: 7px; text-align: center; }
.tray svg { width: 10px; height: 9px; }
.tray p { width: 16px; }
.tray .clock { width: 38px; }

/* risk dialog */
.dialog { position: absolute; left: 499px; top: 179px; width: 348px; height: 260px; background: #fff; border: 1px solid #bbb; display: flex; flex-direction: column; }
.dtitle { display: flex; align-items: center; gap: 3px; height: 15px; padding: 0 8px 0 4px; font: 6px/8px Inter, sans-serif; color: #aaa; }
.dctl { width: 60px; height: 8px; margin-left: auto; }
.dtabs { display: flex; height: 26px; padding-top: 2px; border-bottom: 1px solid #ddd; font: bold 7px/23px "DejaVu Sans", sans-serif; color: #111; }
.dtabs a { width: 44px; text-align: center; background: #f0f0f0; border: 1px solid #ddd; border-bottom: 0; }
.dtabs .on { width: 47px; background: #fff; border-color: #fff; }
.dbody { flex: 1; margin: 1px 2px 0; border: 1px solid #999; border-top: 0; }
h4 { height: 25px; background: #9cccff; text-align: center; font: bold 7px/24px "DejaVu Sans", sans-serif; color: #111; }
.dialog table { font: bold 7px/10px "DejaVu Sans", sans-serif; }
.dialog th { height: 12px; padding: 0; background: #004080; color: #fff; text-align: left; }
.dialog td { height: 10px; padding: 0; background: #3296fc; border-right: 1px solid #9cc8f4; }
.dialog td:last-child { border: 0; }
.dialog .sel { width: 7px; font-size: 6px; color: #012; }
.dialog td.sel { background: #104890; border: 0; }
.dialog .a { width: 94px; text-align: center; }
.dialog .b { width: 57px; text-align: right; }
.dialog .c { width: 106px; padding-left: 3px; }

.marks { position: absolute; left: 0; top: 0; width: 1096px; height: 617px; pointer-events: none; }
```
